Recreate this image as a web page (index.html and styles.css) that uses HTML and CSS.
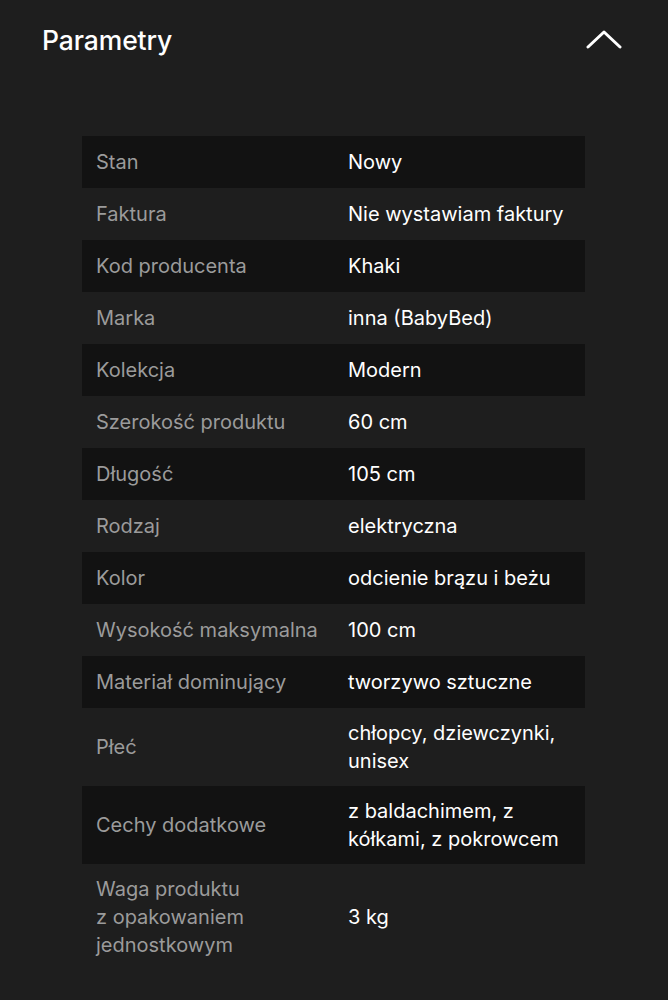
FILE: index.html
```html
<!DOCTYPE html>
<html lang="pl">
<head>
<meta charset="utf-8">
<title>Parametry</title>
<link rel="stylesheet" href="styles.css">
</head>
<body>
<section class="panel">
  <header class="panel-head">
    <h2 class="panel-title">Parametry</h2>
    <svg class="chevron" width="36" height="20" viewBox="0 0 36 20" aria-hidden="true">
      <path d="M2 17 L18 2 L34 17" fill="none" stroke="#fff" stroke-width="3" stroke-linecap="round" stroke-linejoin="round"/>
    </svg>
  </header>
  <table class="params">
    <tbody>
      <tr><th>Stan</th><td>Nowy</td></tr>
      <tr><th>Faktura</th><td>Nie wystawiam faktury</td></tr>
      <tr><th>Kod producenta</th><td>Khaki</td></tr>
      <tr><th>Marka</th><td>inna (BabyBed)</td></tr>
      <tr><th>Kolekcja</th><td>Modern</td></tr>
      <tr><th>Szerokość produktu</th><td>60 cm</td></tr>
      <tr><th>Długość</th><td>105 cm</td></tr>
      <tr><th>Rodzaj</th><td>elektryczna</td></tr>
      <tr><th>Kolor</th><td>odcienie brązu i beżu</td></tr>
      <tr><th>Wysokość maksymalna</th><td>100 cm</td></tr>
      <tr><th>Materiał dominujący</th><td>tworzywo sztuczne</td></tr>
      <tr><th>Płeć</th><td>chłopcy, dziewczynki, unisex</td></tr>
      <tr><th>Cechy dodatkowe</th><td>z baldachimem, z kółkami, z pokrowcem</td></tr>
      <tr><th>Waga produktu<br>z opakowaniem<br>jednostkowym</th><td>3 kg</td></tr>
    </tbody>
  </table>
</section>
</body>
</html>
```
FILE: styles.css
```css
html, body {
  margin: 0;
  padding: 0;
  background: #1e1e1e;
}
body {
  font-family: Inter, "Noto Sans", "DejaVu Sans", sans-serif;
  color: #fff;
  min-height: 1000px;
}
.panel {
  padding: 0 46px 0 42px;
}
.panel-head {
  display: flex;
  align-items: center;
  justify-content: space-between;
  height: 80px;
}
.panel-title {
  margin: 0;
  font-size: 26.5px;
  font-weight: 500;
  letter-spacing: -0.1px;
  color: #fff;
}
.chevron {
  display: block;
}
.params {
  margin: 56px 0 0 40px;
  width: 503px;
  border-collapse: collapse;
  font-size: 20px;
  line-height: 28px;
}
.params tr {
  height: 52px;
}
.params tr:nth-child(odd) {
  background: #121212;
}
.params th,
.params td {
  padding: 11px 14px;
  text-align: left;
  vertical-align: middle;
}
.params th {
  width: 224px;
  font-weight: 400;
  color: #9b9b9b;
}
.params td {
  color: #fff;
}
```
